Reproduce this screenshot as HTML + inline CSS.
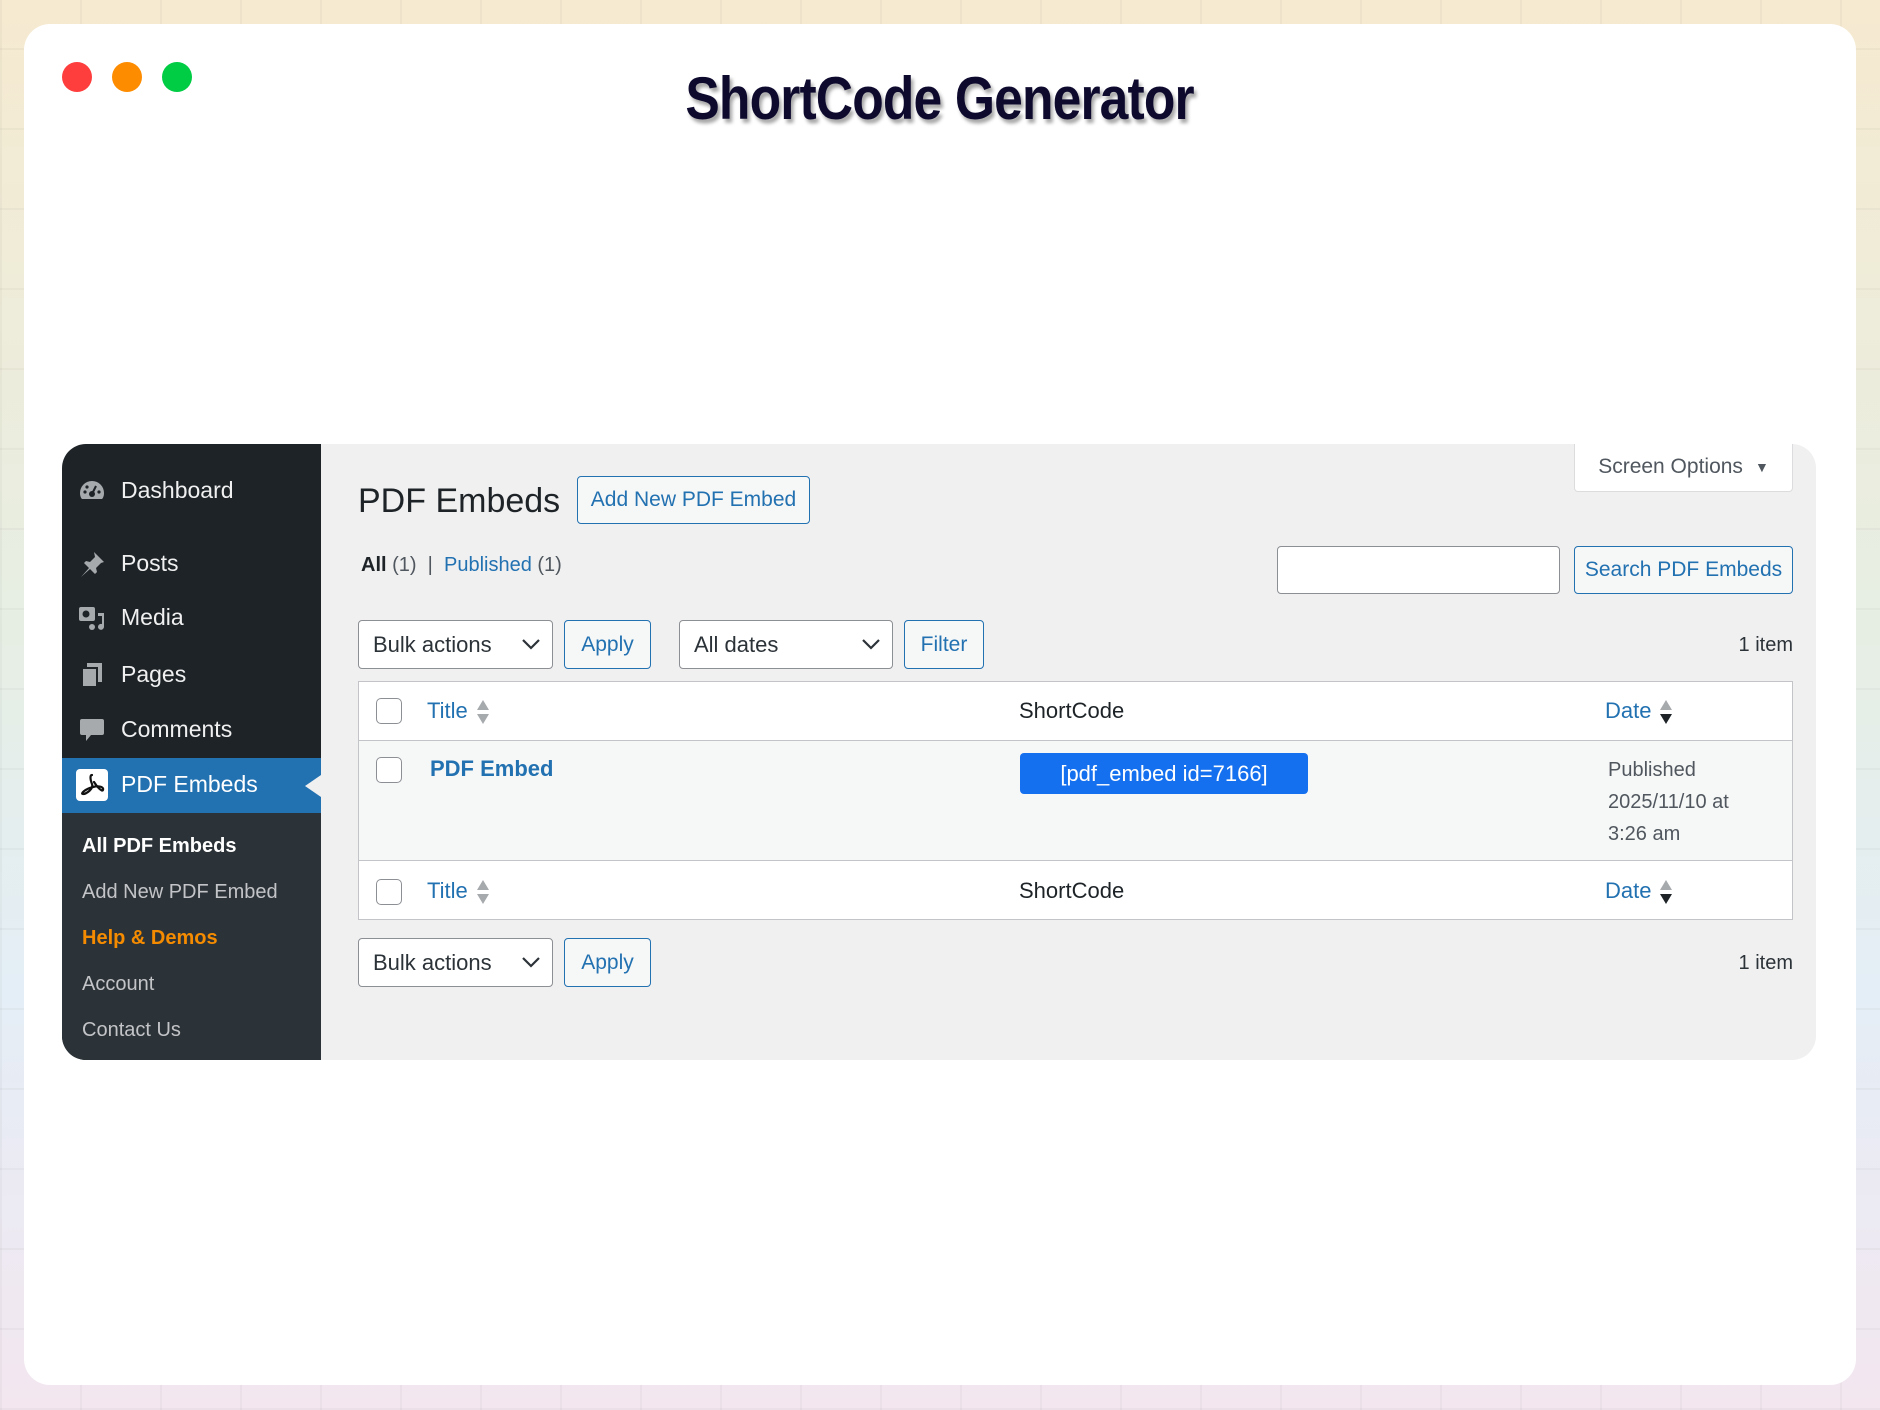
<!DOCTYPE html>
<html><head><meta charset="utf-8"><style>
*{box-sizing:border-box;margin:0;padding:0}
html,body{width:1880px;height:1410px;overflow:hidden}
body{position:relative;font-family:"Liberation Sans",sans-serif;
background:
repeating-linear-gradient(90deg,rgba(0,0,0,0.03) 0 2px,transparent 2px 80px),
repeating-linear-gradient(0deg,rgba(0,0,0,0.03) 0 2px,transparent 2px 80px),
linear-gradient(180deg,#f6ead0 0%,#e6eee4 45%,#e4eef6 70%,#f3e6ef 100%);}
.card{position:absolute;left:24px;top:24px;width:1832px;height:1361px;background:#fff;border-radius:26px}
.dot{position:absolute;top:62px;width:30px;height:30px;border-radius:50%}
.title{position:absolute;left:0;width:1880px;top:64px;text-align:center;font-size:60px;font-weight:bold;color:#0d0a2e;text-shadow:3px 4px 4px rgba(0,0,0,0.35);letter-spacing:-1px}
.title span{display:inline-block;transform:scaleX(0.86)}
.wp{position:absolute;left:62px;top:444px;width:1754px;height:616px;background:#f0f0f1;border-radius:24px;overflow:hidden}
.side{position:absolute;left:0;top:0;width:259px;height:616px;background:#1d2327}
.sub{position:absolute;left:0;top:369px;width:259px;height:247px;background:#2c3338}
.mi{position:absolute;left:59px;font-size:23px;color:#f0f0f1}
.ic{position:absolute;left:16px;width:28px;height:28px}
.hl{position:absolute;left:0;top:314px;width:259px;height:55px;background:#2271b1}
.si{position:absolute;left:20px;font-size:20px;color:#c3c4c7}
.m{position:absolute;color:#1d2327}
.btn{position:absolute;border:1px solid #2271b1;border-radius:4px;background:#f6f7f7;color:#2271b1;font-size:21px;display:flex;align-items:center;justify-content:center}
.sel{position:absolute;border:1px solid #8c8f94;border-radius:4px;background:#fff;color:#2c3338;font-size:22px;padding-left:14px;display:flex;align-items:center}
.sel svg{position:absolute;right:12px;top:50%;margin-top:-6px}
.cb{position:absolute;width:26px;height:26px;border:1px solid #8c8f94;border-radius:5px;background:#fff}
.lk{color:#2271b1}
.arr{display:inline-block;vertical-align:middle;margin-left:8px}
</style></head><body>
<div class="card"></div>
<div class="dot" style="left:62px;background:#fe3d3d"></div>
<div class="dot" style="left:112px;background:#fe8c00"></div>
<div class="dot" style="left:162px;background:#00cc44"></div>
<div class="title"><span>ShortCode Generator</span></div>

<div class="wp">
 <div class="side">
  <svg class="ic" style="top:33px" viewBox="0 0 28 28"><path d="M14 4a12 12 0 0 0-12 12c0 3 1 5 2 6h20c1-1 2-3 2-6A12 12 0 0 0 14 4z" fill="#a7aaad"/><circle cx="14" cy="17" r="3" fill="#1d2327"/><path d="M14 17l4-8" stroke="#1d2327" stroke-width="2"/><circle cx="7" cy="15" r="1.6" fill="#1d2327"/><circle cx="9" cy="10" r="1.6" fill="#1d2327"/><circle cx="21" cy="15" r="1.6" fill="#1d2327"/></svg>
  <div class="mi" style="top:33px">Dashboard</div>
  <svg class="ic" style="top:106px" viewBox="0 0 28 28"><path d="M16 2l10 10-3 1-5 5 1 4-2 2-5-5-9 8 8-9-5-5 2-2 4 1 5-5z" fill="#a7aaad"/></svg>
  <div class="mi" style="top:106px">Posts</div>
  <svg class="ic" style="top:160px" viewBox="0 0 28 28"><rect x="1" y="3" width="16" height="14" rx="2" fill="#a7aaad"/><circle cx="8" cy="10" r="3.5" fill="#1d2327"/><path d="M20 9h6v14a3 3 0 1 1-2-3V12h-4z" fill="#a7aaad"/><circle cx="14" cy="23" r="3" fill="#a7aaad"/></svg>
  <div class="mi" style="top:160px">Media</div>
  <svg class="ic" style="top:217px" viewBox="0 0 28 28"><rect x="9" y="2" width="15" height="19" fill="#a7aaad"/><rect x="4" y="7" width="15" height="19" fill="#a7aaad" stroke="#1d2327" stroke-width="2"/></svg>
  <div class="mi" style="top:217px">Pages</div>
  <svg class="ic" style="top:272px" viewBox="0 0 28 28"><path d="M4 3h20a2 2 0 0 1 2 2v12a2 2 0 0 1-2 2H13l-5 6v-6H4a2 2 0 0 1-2-2V5a2 2 0 0 1 2-2z" fill="#a7aaad"/></svg>
  <div class="mi" style="top:272px">Comments</div>
  <div class="hl"></div>
  <div style="position:absolute;left:243px;top:331px;width:0;height:0;border-top:11px solid transparent;border-bottom:11px solid transparent;border-right:16px solid #f0f0f1"></div>
  <div style="position:absolute;left:14px;top:325px;width:32px;height:32px;background:#fff;border-radius:4px"><svg viewBox="0 0 32 32" width="32" height="32"><path d="M16 6c-2 0-2 4 0 9s-6 10-9 10 2-5 10-7 11 1 10 3-6-3-9-8" stroke="#111" stroke-width="2.2" fill="none" stroke-linecap="round"/></svg></div>
  <div class="mi" style="top:327px;color:#fff">PDF Embeds</div>
  <div class="sub">
   <div class="si" style="top:22px;color:#fff;font-weight:bold">All PDF Embeds</div>
   <div class="si" style="top:68px">Add New PDF Embed</div>
   <div class="si" style="top:114px;color:#f58b00;font-weight:bold">Help &amp; Demos</div>
   <div class="si" style="top:160px">Account</div>
   <div class="si" style="top:206px">Contact Us</div>
  </div>
 </div>

 <div style="position:absolute;left:1512px;top:-2px;width:219px;height:50px;background:#fff;border:1px solid #dcdcde;border-top:none;border-radius:0 0 4px 4px;font-size:21px;color:#50575e;display:flex;align-items:center;justify-content:center">Screen Options <span style="font-size:14px;margin-left:12px">▼</span></div>

 <div class="m" style="left:296px;top:38px;font-size:34px">PDF Embeds</div>
 <div class="btn" style="left:515px;top:32px;width:233px;height:48px">Add New PDF Embed</div>
 <div class="m" style="left:299px;top:110px;font-size:20px;color:#50575e"><b style="color:#1d2327">All</b> (1) &nbsp;| &nbsp;<span class="lk">Published</span> (1)</div>
 <div style="position:absolute;left:1215px;top:102px;width:283px;height:48px;background:#fff;border:1px solid #8c8f94;border-radius:4px"></div>
 <div class="btn" style="left:1512px;top:102px;width:219px;height:48px">Search PDF Embeds</div>

 <div class="sel" style="left:296px;top:176px;width:195px;height:49px">Bulk actions<svg width="18" height="11" viewBox="0 0 18 11"><path d="M1 1l8 8 8-8" stroke="#2c3338" stroke-width="2.2" fill="none"/></svg></div>
 <div class="btn" style="left:502px;top:176px;width:87px;height:49px">Apply</div>
 <div class="sel" style="left:617px;top:176px;width:214px;height:49px">All dates<svg width="18" height="11" viewBox="0 0 18 11"><path d="M1 1l8 8 8-8" stroke="#2c3338" stroke-width="2.2" fill="none"/></svg></div>
 <div class="btn" style="left:842px;top:176px;width:80px;height:49px">Filter</div>
 <div class="m" style="right:23px;top:190px;font-size:20px;color:#2c3338">1 item</div>

 <div style="position:absolute;left:296px;top:237px;width:1435px;height:239px;background:#fff;border:1px solid #c3c4c7"></div>
 <div style="position:absolute;left:297px;top:296px;width:1433px;height:121px;background:#f6f7f7;border-top:1px solid #c3c4c7;border-bottom:1px solid #c3c4c7"></div>
 <div class="cb" style="left:314px;top:254px"></div>
 <div class="m lk" style="left:365px;top:254px;font-size:22px">Title<svg class="arr" width="14" height="26" viewBox="0 0 14 26"><path d="M7 1l6 10H1zM7 25l6-10H1z" fill="#a7aaad"/></svg></div>
 <div class="m" style="left:957px;top:254px;font-size:22px">ShortCode</div>
 <div class="m lk" style="left:1543px;top:254px;font-size:22px">Date<svg class="arr" width="14" height="26" viewBox="0 0 14 26"><path d="M7 1l6 10H1z" fill="#a7aaad"/><path d="M7 25l6-10H1z" fill="#1d2327"/></svg></div>

 <div class="cb" style="left:314px;top:313px"></div>
 <div class="m lk" style="left:368px;top:312px;font-size:22px;font-weight:bold">PDF Embed</div>
 <div style="position:absolute;left:958px;top:309px;width:288px;height:41px;background:#1570ef;border-radius:4px;color:#fff;font-size:22px;display:flex;align-items:center;justify-content:center">[pdf_embed id=7166]</div>
 <div class="m" style="left:1546px;top:310px;font-size:20px;line-height:32px;color:#50575e">Published<br>2025/11/10 at<br>3:26 am</div>

 <div class="cb" style="left:314px;top:435px"></div>
 <div class="m lk" style="left:365px;top:434px;font-size:22px">Title<svg class="arr" width="14" height="26" viewBox="0 0 14 26"><path d="M7 1l6 10H1zM7 25l6-10H1z" fill="#a7aaad"/></svg></div>
 <div class="m" style="left:957px;top:434px;font-size:22px">ShortCode</div>
 <div class="m lk" style="left:1543px;top:434px;font-size:22px">Date<svg class="arr" width="14" height="26" viewBox="0 0 14 26"><path d="M7 1l6 10H1z" fill="#a7aaad"/><path d="M7 25l6-10H1z" fill="#1d2327"/></svg></div>

 <div class="sel" style="left:296px;top:494px;width:195px;height:49px">Bulk actions<svg width="18" height="11" viewBox="0 0 18 11"><path d="M1 1l8 8 8-8" stroke="#2c3338" stroke-width="2.2" fill="none"/></svg></div>
 <div class="btn" style="left:502px;top:494px;width:87px;height:49px">Apply</div>
 <div class="m" style="right:23px;top:508px;font-size:20px;color:#2c3338">1 item</div>
</div>
</body></html>
